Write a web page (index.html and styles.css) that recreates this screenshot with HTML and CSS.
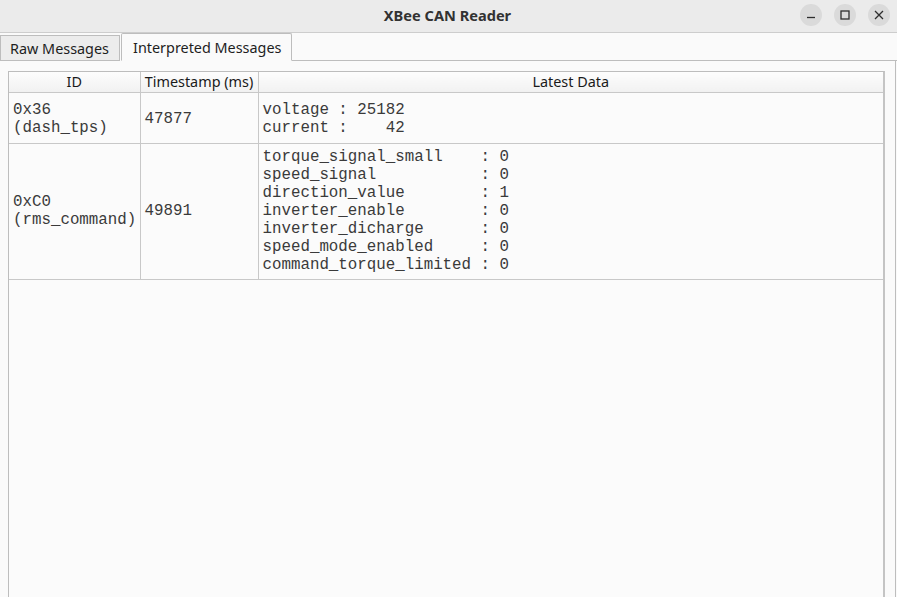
FILE: index.html
```html
<!DOCTYPE html>
<html>
<head>
<meta charset="utf-8">
<title>XBee CAN Reader</title>
<link rel="stylesheet" href="styles.css">
</head>
<body>
<div class="window">
  <header class="titlebar">
    <div class="title">XBee CAN Reader</div>
    <div class="controls">
      <button class="ctl" aria-label="Minimize">
        <svg width="12" height="12" viewBox="0 0 12 12"><path d="M2 8.5h8" stroke="#2e2e2e" stroke-width="1.3" fill="none"/></svg>
      </button>
      <button class="ctl" aria-label="Maximize">
        <svg width="12" height="12" viewBox="0 0 12 12"><rect x="2" y="2" width="8" height="8" stroke="#2e2e2e" stroke-width="1.3" fill="none"/></svg>
      </button>
      <button class="ctl" aria-label="Close">
        <svg width="12" height="12" viewBox="0 0 12 12"><path d="M2 2l8 8M10 2l-8 8" stroke="#2e2e2e" stroke-width="1.3" fill="none"/></svg>
      </button>
    </div>
  </header>
  <nav class="tabbar">
    <div class="tab raw">Raw Messages</div>
    <div class="tab active">Interpreted Messages</div>
    <div class="tab-rest"></div>
  </nav>
  <main class="pane">
    <div class="frame">
      <table class="grid">
        <colgroup>
          <col class="c-id">
          <col class="c-ts">
          <col class="c-data">
        </colgroup>
        <thead>
          <tr><th>ID</th><th>Timestamp (ms)</th><th>Latest Data</th></tr>
        </thead>
        <tbody>
          <tr class="r1">
            <td>0x36<br>(dash_tps)</td>
            <td>47877</td>
            <td>voltage : 25182
current :    42</td>
          </tr>
          <tr class="r2">
            <td>0xC0<br>(rms_command)</td>
            <td>49891</td>
            <td>torque_signal_small    : 0
speed_signal           : 0
direction_value        : 1
inverter_enable        : 0
inverter_dicharge      : 0
speed_mode_enabled     : 0
command_torque_limited : 0</td>
          </tr>
        </tbody>
      </table>
    </div>
  </main>
</div>
</body>
</html>
```

FILE: styles.css
```css
* { box-sizing: border-box; }
html, body { margin: 0; height: 100%; }
body {
  background: #fafafa;
  font-family: "Noto Sans", "DejaVu Sans", sans-serif;
  color: #1e1e1e;
  overflow: hidden;
}
.window {
  display: flex;
  flex-direction: column;
  height: 597px;
}
.titlebar {
  position: relative;
  height: 33px;
  flex: none;
  background: #ebebeb;
  border-bottom: 1px solid #cdcdcd;
  display: flex;
  align-items: center;
  justify-content: center;
}
.title {
  font-weight: 700;
  font-size: 14.6px;
  color: #323232;
  margin-top: -2px;
  margin-left: -2px;
}
.controls {
  position: absolute;
  right: 7px;
  top: 4px;
  display: flex;
  gap: 12px;
}
.ctl {
  width: 22px;
  height: 22px;
  border-radius: 50%;
  border: none;
  padding: 0;
  background: #dadada;
  display: flex;
  align-items: center;
  justify-content: center;
}
.tabbar {
  height: 28px;
  flex: none;
  display: flex;
  align-items: flex-end;
  background: #fafafa;
}
.tab {
  height: 26px;
  display: flex;
  align-items: center;
  font-size: 14.4px;
  background: #ececec;
  border: 1px solid #bdbdbd;
  margin-right: 1px;
  color: #1e1e1e;
  white-space: nowrap;
}
.tab.raw {
  width: 120px;
  padding-left: 9px;
}
.tab.active {
  width: 171px;
  height: 28px;
  padding-left: 11px;
  background: #fafafa;
  border-bottom-color: #fafafa;
  border-radius: 2px 2px 0 0;
}
.tab-rest {
  flex: 1;
  align-self: stretch;
  border-bottom: 1px solid #bdbdbd;
  margin-left: -1px;
}
.pane {
  flex: 1;
  display: flex;
  flex-direction: column;
  padding: 10px 10px 0 8px;
  border-right: 1px solid #bdbdbd;
  margin-right: 1px;
  min-height: 0;
}
.frame {
  flex: 1;
  border: 1px solid #bdbdbd;
  border-right: 2px solid #c4c4c4;
  border-bottom: none;
  background: #fbfbfb;
}
.grid {
  border-collapse: collapse;
  width: 100%;
  table-layout: fixed;
}
.c-id { width: 131px; }
.c-ts { width: 118px; }
.grid th {
  height: 20px;
  padding: 1px 0 0;
  font-weight: 400;
  font-size: 14.4px;
  background: linear-gradient(#fdfdfd, #f1f1f1);
  border-left: 1px solid #c8c8c8;
  border-bottom: 1px solid #c8c8c8;
  text-align: center;
  line-height: 18px;
  color: #1a1a1a;
}
.grid th:first-child { border-left: none; }
.grid td {
  font-family: "Liberation Mono", "Courier New", monospace;
  font-size: 15.8px;
  line-height: 18px;
  color: #3a3a3a;
  white-space: pre;
  vertical-align: middle;
  padding: 6px 4px 3px 4px;
  border-left: 1px solid #c8c8c8;
  border-bottom: 1px solid #c8c8c8;
}
.grid td:first-child { border-left: none; }
.grid tr.r1 td { height: 51px; }
.grid tr.r2 td { height: 136px; padding-top: 4px; padding-bottom: 5px; }
```
